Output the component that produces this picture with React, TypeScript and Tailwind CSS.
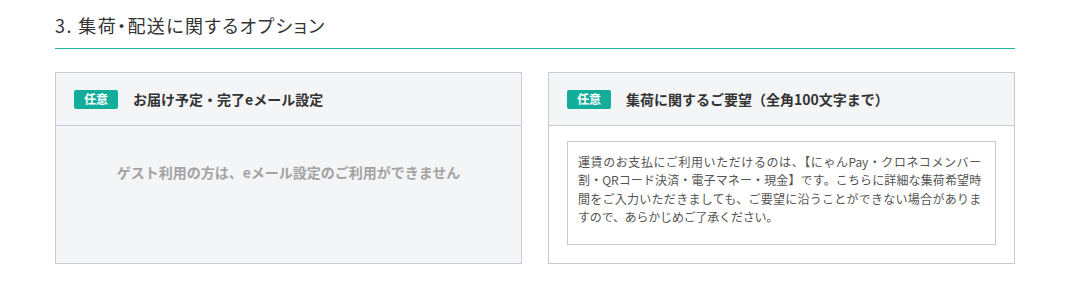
import React from 'react';

const FONT = "font-['Noto_Sans_CJK_JP','Noto_Sans',sans-serif]";

const NOTE_LINES = [
  '運賃のお支払にご利用いただけるのは、【にゃんPay・クロネコメンバー',
  '割・QRコード決済・電子マネー・現金】です。こちらに詳細な集荷希望時',
  '間をご入力いただきましても、ご要望に沿うことができない場合がありま',
  'すので、あらかじめご了承ください。',
];

const Badge: React.FC = () => (
  <span className="inline-flex items-center justify-center w-[44px] h-[19px] rounded-[2px] bg-[#13ae9b] text-white text-[12px] font-bold leading-none mr-[15px]">
    任意
  </span>
);

const CardHeader: React.FC<{ title: string }> = ({ title }) => (
  <div className="flex items-center h-[53px] px-[18px] bg-[#f4f5f7] border-b border-[#c8c9d3]">
    <Badge />
    <span className="text-[14px] font-bold text-[#333]">{title}</span>
  </div>
);

const App: React.FC = () => {
  return (
    <div className={`${FONT} bg-white min-h-[295px] w-[1072px]`}>
      <div className="ml-[55px] w-[960px] pt-[11px]">
        <h2 className="text-[18px] leading-[28px] text-[#333] pb-[9px] tracking-[1.4px] [font-feature-settings:'palt']">
          3. 集荷・配送に関するオプション
        </h2>
        <div className="h-[1px] bg-[#1cb5a3]" />
        <div className="flex gap-[26px] mt-[23px]">
          {/* left card */}
          <div className="flex-1 flex flex-col h-[192px] border border-[#c8c9d3] bg-[#f4f5f7]">
            <CardHeader title="お届け予定・完了eメール設定" />
            <div className="flex-1 pt-[36px] text-center text-[14px] leading-[21px] font-bold text-[#a3a3a3]">
              ゲスト利用の方は、eメール設定のご利用ができません
            </div>
          </div>
          {/* right card */}
          <div className="flex-1 flex flex-col h-[192px] border border-[#c8c9d3] bg-white">
            <CardHeader title="集荷に関するご要望（全角100文字まで）" />
            <div className="flex-1 pt-[15px] pb-[16px] px-[18px]">
              <div className="h-[104px] border border-[#c8c9d3] pt-[11px] pl-[10px] pr-[14px]">
                <div className="text-[12px] leading-[18.3px] text-[#555] tracking-[-0.2px]">
                  {NOTE_LINES.map((line, i) => (
                    <p
                      key={i}
                      className={i < NOTE_LINES.length - 1 ? 'whitespace-nowrap text-justify [text-align-last:justify]' : 'whitespace-nowrap'}
                    >
                      {line}
                    </p>
                  ))}
                </div>
              </div>
            </div>
          </div>
        </div>
      </div>
    </div>
  );
};

export default App;
